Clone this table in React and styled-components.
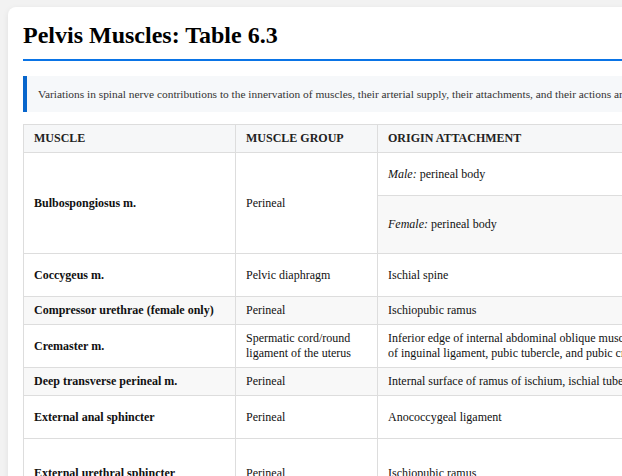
import React from "react";
import styled, { createGlobalStyle } from "styled-components";

const Global = createGlobalStyle`
  html, body { margin: 0; padding: 0; overflow: hidden; background: #f2f2f2; }
  body { font-family: "Liberation Serif", "Times New Roman", serif; color: #111; }
`;

const Page = styled.div`
  padding: 7px 8px;
`;

const Card = styled.div`
  width: 1240px;
  background: #fff;
  border-radius: 8px;
  box-shadow: 0 2px 6px rgba(0, 0, 0, 0.08);
  padding: 15px;
  box-sizing: border-box;
`;

const Title = styled.h1`
  margin: 0;
  font-size: 24px;
  font-weight: bold;
  color: #000;
  padding-bottom: 10px;
  border-bottom: 2px solid #0a74e6;
`;

const Note = styled.div`
  margin: 15px 0 12px;
  background: #f6f8fa;
  border-left: 4px solid #0866cc;
  padding: 12px 11px;
  font-size: 11.4px;
  line-height: 12px;
  color: #333;
  white-space: nowrap;
`;

const Table = styled.table`
  border-collapse: collapse;
  table-layout: fixed;
  width: 1200px;
  font-size: 12px;
  line-height: 15px;
`;

const Th = styled.th`
  background: #f6f7f8;
  border: 1px solid #ddd;
  padding: 6px 10px;
  text-align: left;
  text-transform: uppercase;
  font-weight: bold;
  color: #222;
`;

const Row = styled.tr`
  background: ${(p) => (p.$alt ? "#f8f8f8" : "#fff")};
  height: ${(p) => p.$h}px;
`;

const Td = styled.td`
  border: 1px solid #ddd;
  padding: 6px 10px;
  vertical-align: middle;
  color: #111;
  font-weight: ${(p) => (p.$bold ? "bold" : "normal")};
  background: ${(p) => (p.$bg ? p.$bg : "inherit")};
`;

const Sex = styled.em`
  font-style: italic;
`;

const rows = [
  { muscle: "Bulbospongiosus m.", group: "Perineal", span: 2, origin: [<Sex key="m">Male:</Sex>, " perineal body"], h: 43, ins: "Corpus spongiosum and perineal membrane", nerve: "Pudendal n. (perineal branch)" },
  { origin: [<Sex key="f">Female:</Sex>, " perineal body"], h: 58, alt: true, ins: "Pubic arch and fascia of the corpus cavernosum of the clitoris", nerve: "Pudendal n. (perineal branch)" },
  { muscle: "Coccygeus m.", group: "Pelvic diaphragm", origin: "Ischial spine", h: 43, ins: "Inferior end of sacrum and coccyx", nerve: "Branches of S4 and S5 spinal nerves" },
  { muscle: "Compressor urethrae (female only)", group: "Perineal", origin: "Ischiopubic ramus", h: 28, alt: true, ins: "Blends with partner of opposite side", nerve: "Pudendal n." },
  { muscle: "Cremaster m.", group: "Spermatic cord/round ligament of the uterus", origin: "Inferior edge of internal abdominal oblique muscle, middle third of inguinal ligament, pubic tubercle, and pubic crest", h: 43, ins: "Pubic tubercle and crest", nerve: "Genital branch of genitofemoral n." },
  { muscle: "Deep transverse perineal m.", group: "Perineal", origin: "Internal surface of ramus of ischium, ischial tuberosity", h: 28, alt: true, ins: "Perineal body", nerve: "Pudendal n." },
  { muscle: "External anal sphincter", group: "Perineal", origin: "Anococcygeal ligament", h: 43, ins: "Perineal body", nerve: "Inferior anal (rectal) n." },
  { muscle: "External urethral sphincter", group: "Perineal", origin: "Ischiopubic ramus", h: 70, ins: "Surrounds urethra", nerve: "Pudendal n." },
];

export default function App() {
  return (
    <>
      <Global />
      <Page>
        <Card>
          <Title>Pelvis Muscles: Table 6.3</Title>
          <Note>
            Variations in spinal nerve contributions to the innervation of muscles, their arterial supply, their attachments, and their actions are common themes in human anatomy.
          </Note>
          <Table>
            <colgroup>
              <col style={{ width: 212 }} />
              <col style={{ width: 142 }} />
              <col style={{ width: 336 }} />
              <col style={{ width: 295 }} />
              <col style={{ width: 215 }} />
            </colgroup>
            <thead>
              <tr>
                <Th>Muscle</Th>
                <Th>Muscle Group</Th>
                <Th>Origin Attachment</Th>
                <Th>Insertion Attachment</Th>
                <Th>Innervation</Th>
              </tr>
            </thead>
            <tbody>
              {rows.map((r, i) => (
                <Row key={i} $alt={r.alt} $h={r.h}>
                  {r.muscle && (
                    <Td $bold rowSpan={r.span || 1} $bg={r.span ? "#fff" : undefined}>
                      {r.muscle}
                    </Td>
                  )}
                  {r.group && (
                    <Td rowSpan={r.span || 1} $bg={r.span ? "#fff" : undefined}>
                      {r.group}
                    </Td>
                  )}
                  <Td>{r.origin}</Td>
                  <Td>{r.ins}</Td>
                  <Td>{r.nerve}</Td>
                </Row>
              ))}
            </tbody>
          </Table>
        </Card>
      </Page>
    </>
  );
}
